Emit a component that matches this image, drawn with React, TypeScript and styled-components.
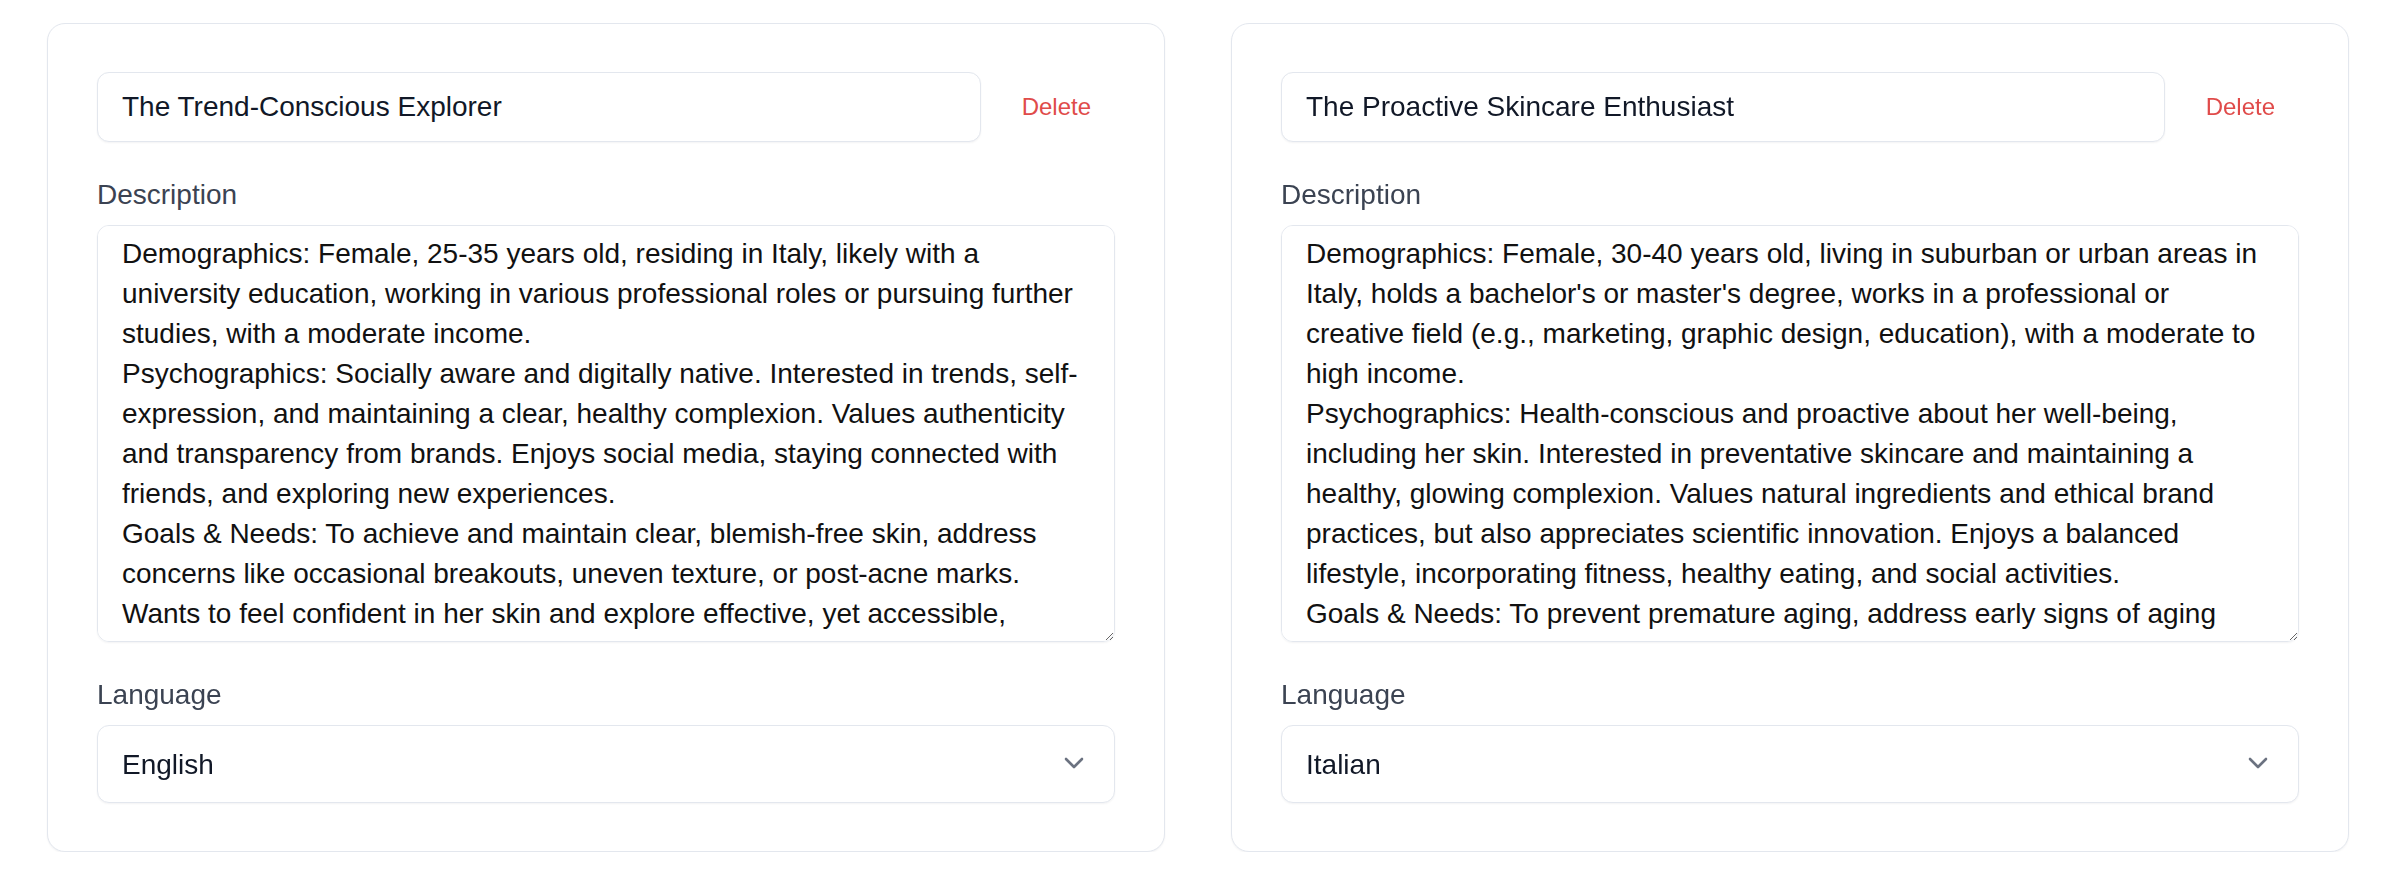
import styled, { createGlobalStyle } from 'styled-components';

const GlobalStyle = createGlobalStyle`
  html, body {
    margin: 0;
    padding: 0;
    background: #ffffff;
  }

  body {
    font-family: "Liberation Sans", Arial, Helvetica, sans-serif;
    color: #111827;
  }
`;

const Page = styled.main`
  display: grid;
  grid-template-columns: 1fr 1fr;
  column-gap: 66px;
  padding: 23px 59px 0 47px;
`;

const Card = styled.section`
  display: flex;
  flex-direction: column;
  padding: 48px 49px;
  background: #ffffff;
  border: 1px solid #e3e7ee;
  border-radius: 18px;
  box-shadow: 0 1px 2px rgba(15, 23, 42, 0.05);
`;

const HeaderRow = styled.div`
  display: flex;
  align-items: center;
  gap: 17px;
`;

const TitleInput = styled.input`
  flex: 1;
  min-width: 0;
  height: 70px;
  box-sizing: border-box;
  padding: 0 24px;
  font-family: inherit;
  font-size: 28px;
  color: #111827;
  background: #ffffff;
  border: 1px solid #e3e7ee;
  border-radius: 12px;
  box-shadow: 0 1px 2px rgba(15, 23, 42, 0.05);
  outline: none;
`;

const DeleteButton = styled.button`
  padding: 0 24px;
  height: 44px;
  font-family: inherit;
  font-size: 24px;
  color: #e04b4a;
  background: transparent;
  border: none;
  cursor: pointer;
`;

const Field = styled.div`
  display: flex;
  flex-direction: column;
  margin-top: 33px;
`;

const Label = styled.label`
  font-size: 28px;
  line-height: 40px;
  color: #3b4352;
  margin-bottom: 10px;
`;

const DescriptionArea = styled.textarea`
  height: 417px;
  box-sizing: border-box;
  padding: 8px 29px 0 24px;
  font-family: "Liberation Sans", Arial, Helvetica, sans-serif;
  font-size: 28px;
  line-height: 40px;
  color: #111111;
  background: #ffffff;
  border: 1px solid #e3e7ee;
  border-radius: 12px;
  box-shadow: 0 1px 2px rgba(15, 23, 42, 0.05);
  outline: none;
  resize: vertical;
  scrollbar-width: none;

  &::-webkit-scrollbar {
    display: none;
  }
`;

const SelectWrap = styled.div`
  position: relative;
`;

const LanguageSelect = styled.select`
  width: 100%;
  height: 78px;
  box-sizing: border-box;
  padding: 0 70px 0 24px;
  font-family: inherit;
  font-size: 28px;
  color: #111827;
  background: #ffffff;
  border: 1px solid #e3e7ee;
  border-radius: 12px;
  box-shadow: 0 1px 2px rgba(15, 23, 42, 0.05);
  appearance: none;
  -webkit-appearance: none;
  outline: none;
`;

const Chevron = styled.svg`
  position: absolute;
  right: 31px;
  top: 50%;
  width: 20px;
  height: 12px;
  margin-top: -7px;
  pointer-events: none;
`;

type Persona = {
  name: string;
  description: string;
  language: string;
};

const personas: Persona[] = [
  {
    name: 'The Trend-Conscious Explorer',
    description:
      'Demographics: Female, 25-35 years old, residing in Italy, likely with a university education, working in various professional roles or pursuing further studies, with a moderate income.\n' +
      'Psychographics: Socially aware and digitally native. Interested in trends, self-expression, and maintaining a clear, healthy complexion. Values authenticity and transparency from brands. Enjoys social media, staying connected with friends, and exploring new experiences.\n' +
      'Goals & Needs: To achieve and maintain clear, blemish-free skin, address concerns like occasional breakouts, uneven texture, or post-acne marks. Wants to feel confident in her skin and explore effective, yet accessible, skincare solutions that fit her routine.',
    language: 'English',
  },
  {
    name: 'The Proactive Skincare Enthusiast',
    description:
      "Demographics: Female, 30-40 years old, living in suburban or urban areas in Italy, holds a bachelor's or master's degree, works in a professional or creative field (e.g., marketing, graphic design, education), with a moderate to high income.\n" +
      'Psychographics: Health-conscious and proactive about her well-being, including her skin. Interested in preventative skincare and maintaining a healthy, glowing complexion. Values natural ingredients and ethical brand practices, but also appreciates scientific innovation. Enjoys a balanced lifestyle, incorporating fitness, healthy eating, and social activities.\n' +
      'Goals & Needs: To prevent premature aging, address early signs of aging such as fine lines and dullness, and keep her skin hydrated and radiant.',
    language: 'Italian',
  },
];

const languages = ['English', 'Italian', 'Spanish', 'French', 'German'];

const PersonaCard = ({ persona }: { persona: Persona }) => (
  <Card>
    <HeaderRow>
      <TitleInput defaultValue={persona.name} />
      <DeleteButton type="button">Delete</DeleteButton>
    </HeaderRow>

    <Field>
      <Label>Description</Label>
      <DescriptionArea defaultValue={persona.description} />
    </Field>

    <Field>
      <Label>Language</Label>
      <SelectWrap>
        <LanguageSelect defaultValue={persona.language}>
          {languages.map((lang) => (
            <option key={lang} value={lang}>
              {lang}
            </option>
          ))}
        </LanguageSelect>
        <Chevron viewBox="0 0 20 12" fill="none">
          <path
            d="M2 2 L10 10 L18 2"
            stroke="#6b7280"
            strokeWidth="2.6"
            strokeLinecap="round"
            strokeLinejoin="round"
          />
        </Chevron>
      </SelectWrap>
    </Field>
  </Card>
);

export default function App() {
  return (
    <>
      <GlobalStyle />
      <Page>
        {personas.map((persona) => (
          <PersonaCard key={persona.name} persona={persona} />
        ))}
      </Page>
    </>
  );
}
